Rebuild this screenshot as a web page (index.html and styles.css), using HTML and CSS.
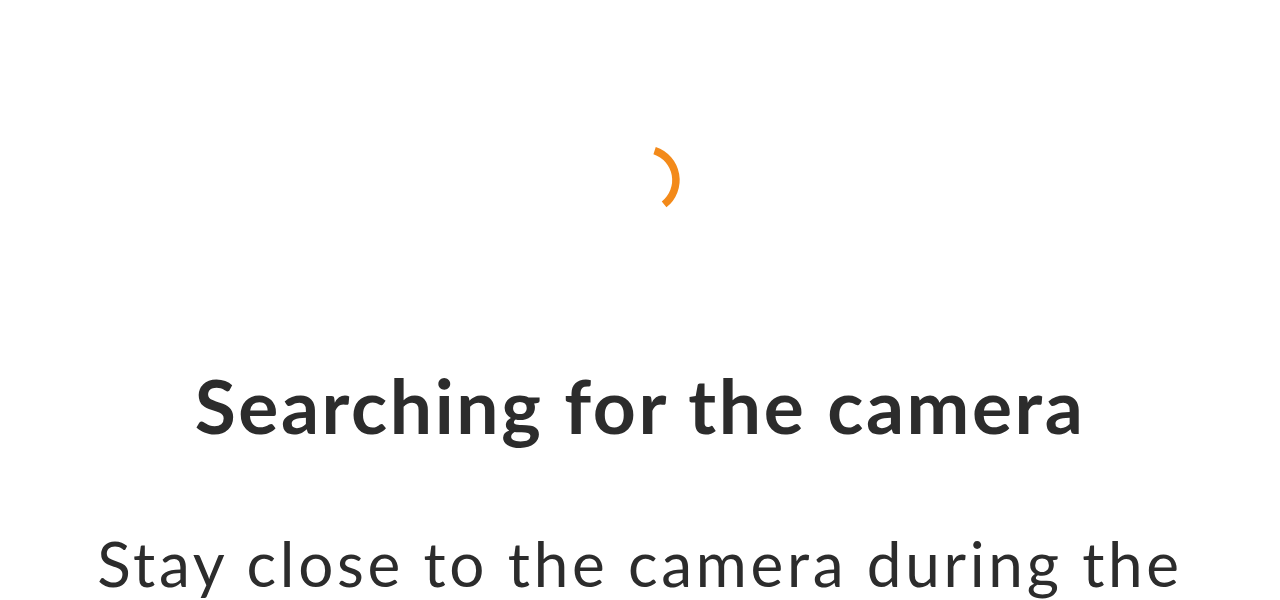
FILE: index.html
```html
<!DOCTYPE html>
<html lang="en">
<head>
    <meta charset="UTF-8">
    <meta name="viewport" content="width=device-width, initial-scale=1.0">
    <title>Searching for the camera</title>
    <link rel="stylesheet" href="styles.css">
</head>
<body>
    <div class="container search-container">
        <div class="spinner">
            <svg width="80" height="80" viewBox="0 0 80 80">
                <path d="M 49.6 10.6 A 31 31 0 0 1 59.1 64.4" fill="none" stroke="#f38a1a" stroke-width="7.5" />
            </svg>
        </div>
        <h1 class="title">Searching for the camera</h1>
        <p class="message">Stay close to the camera during the setup so your phone can find it.</p>
    </div>
</body>
</html>
```

FILE: styles.css
```css
html, body {
    margin: 0;
    padding: 0;
    background-color: #ffffff;
}

.container {
    display: flex;
    flex-direction: column;
    align-items: center;
    padding-top: 140px;
    font-family: Lato, "Open Sans", sans-serif;
    color: #2c2c2c;
    text-align: center;
}

.spinner {
    width: 80px;
    height: 80px;
    margin-left: 10px;
}

.title {
    margin: 140px 0 0 0;
    font-size: 75px;
    line-height: 90px;
    font-weight: 700;
    letter-spacing: 2.6px;
}

.message {
    margin: 72px 0 0 0;
    max-width: 1110px;
    font-size: 62px;
    line-height: 82px;
    font-weight: 400;
    letter-spacing: 3.7px;
}
```
